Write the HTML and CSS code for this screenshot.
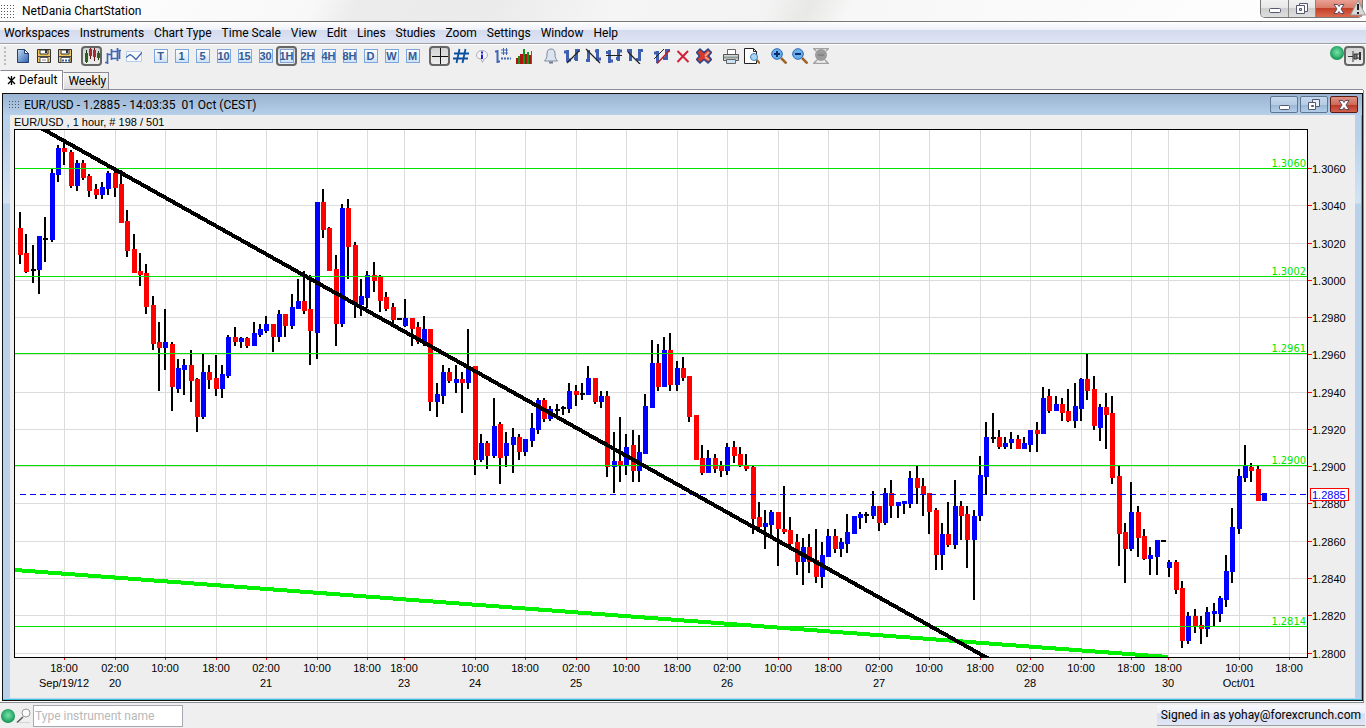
FILE: index.html
```html
<!DOCTYPE html>
<html lang="en">
<head>
    <meta charset="UTF-8">
    <meta name="viewport" content="width=device-width, initial-scale=1.0">
    <title>NetDania ChartStation</title>
    <link rel="stylesheet" href="styles.css">
</head>
<body>
    <header class="titlebar">
        <span class="dots"></span>
        <h1>NetDania ChartStation</h1>
        <div class="app-buttons">
            <button class="app-btn minimize" aria-label="Minimize"><svg width="14" height="14" viewBox="0 0 14 14"><rect x="1.500" y="6.500" width="11" height="4" rx="1" fill="#fff" stroke="#555870"/></svg></button>
            <button class="app-btn restore" aria-label="Restore"><svg width="14" height="14" viewBox="0 0 14 14"><path d="M4.500 1.500h8v8h-8z" fill="#fff" stroke="#555870"/><path d="M1.500 3.500h8v8h-8z" fill="#fff" stroke="#555870"/><path d="M4.500 6.500h2v2h-2z" fill="#ccc" stroke="#555870"/></svg></button>
            <button class="app-btn close" aria-label="Close"><svg width="14" height="14" viewBox="0 0 14 14"><path d="M2 2.500h3.500l1.500 2 1.500-2H12L9 7l3 4.500H8.500L7 9.500l-1.500 2H2L5 7z" fill="#fff" stroke="#5a4a5c"/></svg></button>
        </div>
        <svg class="warning" width="16" height="16" viewBox="0 0 16 16"><path d="M8 0.500L15.500 15H0.500z" fill="#d9d9d9" stroke="#999"/><path d="M8 4v6M8 12v2" stroke="#222" stroke-width="2"/></svg>
    </header>

    <nav class="menubar">
        <button>Workspaces</button>
        <button>Instruments</button>
        <button>Chart Type</button>
        <button>Time Scale</button>
        <button>View</button>
        <button>Edit</button>
        <button>Lines</button>
        <button>Studies</button>
        <button>Zoom</button>
        <button>Settings</button>
        <button>Window</button>
        <button>Help</button>
    </nav>

    <div class="toolbar">
        <span class="grip"></span>
        <div class="tool-group">
            <button class="tool" aria-label="New"><svg width="16" height="16" viewBox="0 0 16 16"><defs><linearGradient id="page" x2="1" y2="1"><stop offset="0" stop-color="#c5dbf5"/><stop offset="1" stop-color="#2f62b0"/></linearGradient></defs><path d="M2.500 1.500h7l4 4v9h-11z" fill="url(#page)" stroke="#23406f"/><path d="M9.500 1.500v4h4z" fill="#fff" stroke="#23406f"/></svg></button>
            <button class="tool" aria-label="Save"><svg width="16" height="16" viewBox="0 0 16 16"><path d="M1.500 1.500h13v13h-13z" fill="#f0c75e" stroke="#333"/><path d="M4 2h8v4H4z" fill="#fff" stroke="#333"/><path d="M9 2h2v3H9z" fill="#333"/><path d="M1.500 8.500h13" stroke="#444"/><path d="M4 9.500h8v5H4z" fill="#fff" stroke="#555"/><path d="M6 12h4" stroke="#888"/></svg></button>
            <button class="tool" aria-label="Save as"><svg width="16" height="16" viewBox="0 0 16 16"><path d="M1.500 1.500h13v13h-13z" fill="#f0c75e" stroke="#333"/><path d="M4 2h8v4H4z" fill="#fff" stroke="#333"/><path d="M9 2h2v3H9z" fill="#333"/><path d="M1.500 8.500h13" stroke="#444"/><path d="M4 9.500h9v5H4z" fill="#fff" stroke="#555"/><path d="M5 12.500h8" stroke="#2f62b0" stroke-width="2" stroke-dasharray="2 1"/></svg></button>
        </div>
        <div class="tool-group">
            <button class="tool pressed" aria-label="Candlesticks"><svg width="16" height="16" viewBox="0 0 16 16"><path d="M2.500 2v13M14.500 3v9" stroke="#173f17"/><path d="M1 5h3v9H1zM13 5h3v5h-3z" fill="#27641f"/><path d="M6.500 0v11M10.500 0v13" stroke="#5c1717"/><path d="M5 1h3v7H5zM9 2h3v7H9z" fill="#a52a33"/></svg></button>
            <button class="tool" aria-label="Bars"><svg width="16" height="16" viewBox="0 0 16 16"><path d="M2.500 5v11M0 14.500h2M3 6.500h3M6.500 1v11M7 3.500h6M7 10.500h5M12.500 0v13M13 2.500h3M14.500 2v9" stroke="#4068b3" stroke-width="1.700" fill="none"/></svg></button>
            <button class="tool" aria-label="Line"><svg width="16" height="16" viewBox="0 0 16 16"><path d="M0.500 3.500h15v10h-15z" fill="#fafdff" stroke="#b4cdea"/><path d="M0 9.500l4-3 3 2 3 3 6-7" stroke="#3d66ad" fill="none" stroke-width="1.400"/></svg></button>
        </div>
        <div class="tool-group">
            <button class="tool"><span class="period">T</span></button>
            <button class="tool"><span class="period">1</span></button>
            <button class="tool"><span class="period">5</span></button>
            <button class="tool"><span class="period">10</span></button>
            <button class="tool"><span class="period">15</span></button>
            <button class="tool"><span class="period">30</span></button>
            <button class="tool pressed"><span class="period">1H</span></button>
            <button class="tool"><span class="period">2H</span></button>
            <button class="tool"><span class="period">4H</span></button>
            <button class="tool"><span class="period">8H</span></button>
            <button class="tool"><span class="period">D</span></button>
            <button class="tool"><span class="period">W</span></button>
            <button class="tool"><span class="period">M</span></button>
        </div>
        <div class="tool-group">
            <button class="tool pressed" aria-label="Crosshair"><svg width="16" height="16" viewBox="0 0 16 16"><path d="M0 8.500h16M8.500 0v16" stroke="#111"/></svg></button>
            <button class="tool" aria-label="Grid"><svg width="16" height="16" viewBox="0 0 16 16"><path d="M6.500 1L3.500 15M12.500 1L9.500 15M1 5.500h15M0 10.500h15" stroke="#0b4fa0" stroke-width="1.800"/></svg></button>
            <button class="tool" aria-label="Info"><svg width="16" height="16" viewBox="0 0 16 16"><path d="M8 2.500c3 0 5.500 2 5.500 4.500S11.500 11 10 11l-1.500 3.500L7 11C4 11 2.500 9.500 2.500 7S5 2.500 8 2.500z" fill="#f4f4f8" stroke="#b0b0b8"/><path d="M8 3.500v2M8 6.500v4M7 10h2" stroke="#1722d6" stroke-width="2"/></svg></button>
            <button class="tool" aria-label="Values"><svg width="16" height="16" viewBox="0 0 16 16"><path d="M2.500 2v13M0 3.500h2M3 13.500h2" stroke="#4068b3" stroke-width="2"/><path d="M8.500 0v7M11.500 0v7M6 2h7M6 5h7" stroke="#4068b3"/><path d="M6 10.500h10" stroke="#4068b3" stroke-dasharray="2 1" stroke-width="2"/></svg></button>
            <button class="tool" aria-label="Volume"><svg width="16" height="16" viewBox="0 0 16 16"><path d="M0 10h2v6H0zM4 6h3v10H4zM9 6h2v10H9zM13 7h2v9h-2z" fill="#b01212"/><path d="M2 8h2v8H2zM7 1h2v15H7zM11 4h2v12h-2zM15 3h1v13h-1z" fill="#179117"/></svg></button>
        </div>
        <div class="tool-group">
            <button class="tool" aria-label="Alarm"><svg width="16" height="16" viewBox="0 0 16 16"><path d="M8 1c-3 0-4 2-4 5 0 4-1 5-2.500 7h13C13 11 12 10 12 6c0-3-1-5-4-5z" fill="#dce4ef" stroke="#7d8ba3"/><path d="M6 14.500h4" stroke="#6f7d95" stroke-width="2"/></svg></button>
            <button class="tool" aria-label="Trend line"><svg width="16" height="16" viewBox="0 0 16 16"><path d="M3.500 2v12M0 4h3M4 12h3M12.500 1v12M10 10.500h2M13 2.500h3" stroke="#3e5fae" stroke-width="3"/><path d="M3 15L15 3" stroke="#222" stroke-width="1.300"/></svg></button>
            <button class="tool" aria-label="Ray"><svg width="16" height="16" viewBox="0 0 16 16"><path d="M3.500 2v12M1 12.500h3M12.500 1v12M10 3h2M13 11h3" stroke="#3e5fae" stroke-width="3"/><path d="M1 1l14 14" stroke="#222" stroke-width="1.300"/></svg></button>
            <button class="tool" aria-label="Horizontal line"><svg width="16" height="16" viewBox="0 0 16 16"><path d="M3.500 2v13M0 4.500h3M4 13h3M12.500 1v12M10 10.500h2M13 3h3" stroke="#3e5fae" stroke-width="3"/><path d="M0 7.500h16" stroke="#222"/></svg></button>
            <button class="tool" aria-label="Segment"><svg width="16" height="16" viewBox="0 0 16 16"><path d="M3.500 1v12M0 2.500h3M12.500 1v12M9 11.500h3M13 2.500h3" stroke="#3e5fae" stroke-width="3"/><path d="M1 4l12 12" stroke="#222" stroke-width="1.300"/></svg></button>
        </div>
        <div class="tool-group">
            <button class="tool" aria-label="Edit lines"><svg width="16" height="16" viewBox="0 0 16 16"><path d="M3.500 3v12M0 5h3M12.500 1v11M9 10.500h3M13 2.500h3" stroke="#3e5fae" stroke-width="3"/><path d="M0 11L10 1" stroke="#222"/><path d="M3 15.500L16 2" stroke="#c11c2c" stroke-width="1.500"/></svg></button>
            <button class="tool" aria-label="Delete"><svg width="16" height="16" viewBox="0 0 16 16"><path d="M2.500 3l11 11M13 3L2.500 14" stroke="#d21f3a" stroke-width="2"/></svg></button>
            <button class="tool" aria-label="Delete all"><svg width="16" height="16" viewBox="0 0 16 16"><path d="M4 1l4 3.500L12 1l3.500 3.500L12.500 8l3 3.500L12 15l-4-3.500L4 15 .500 11.500 3.500 8l-3-3.500z" fill="#d8392b" stroke="#27478d" stroke-width="1.500"/><path d="M9 8l4-4M9 9l4 3" stroke="#f0a08c" stroke-width="2"/></svg></button>
        </div>
        <div class="tool-group">
            <button class="tool" aria-label="Print"><svg width="16" height="16" viewBox="0 0 16 16"><path d="M4.500 1.500h8v5h-8z" fill="#fff" stroke="#666"/><path d="M.500 6.500h15v6H.500z" fill="#d5d8d8" stroke="#555"/><path d="M1 9.500h14" stroke="#8c9a9a" stroke-width="2"/><path d="M3.500 11.500h9v4h-9z" fill="#c9e2f4" stroke="#666"/></svg></button>
            <button class="tool" aria-label="Print preview"><svg width="16" height="16" viewBox="0 0 16 16"><path d="M.500 .500h9l3 3v12H.500z" fill="#fff" stroke="#222"/><path d="M9.500 .500v3h3" fill="none" stroke="#222"/><path d="M12 11l4 4.500" stroke="#9b6328" stroke-width="2"/><circle cx="10" cy="9" r="3.500" fill="#a9d4f4" stroke="#4282bd"/></svg></button>
        </div>
        <div class="tool-group">
            <button class="tool" aria-label="Zoom in"><svg width="16" height="16" viewBox="0 0 16 16"><path d="M10 10l5.500 5.500" stroke="#9b6328" stroke-width="2.500"/><circle cx="6" cy="6" r="5.300" fill="#69b0ee" stroke="#2a66b1"/><path d="M3 6h6M6 3v6" stroke="#0c2f6b" stroke-width="2"/></svg></button>
            <button class="tool" aria-label="Zoom out"><svg width="16" height="16" viewBox="0 0 16 16"><path d="M10 10l5.500 5.500" stroke="#9b6328" stroke-width="2.500"/><circle cx="6" cy="6" r="5.300" fill="#69b0ee" stroke="#2a66b1"/><path d="M3 6h6" stroke="#0c2f6b" stroke-width="2"/></svg></button>
            <button class="tool" aria-label="Zoom reset"><svg width="16" height="16" viewBox="0 0 16 16"><path d="M0 .500h16M0 15.500h16M1 15l3-3M12 12l3 3M1 1l2 2M13 3l2-2" stroke="#a2a2a2" stroke-width="1.500"/><circle cx="8" cy="7" r="6" fill="#9b9b9b"/><path d="M5 7h6" stroke="#868686" stroke-width="2"/></svg></button>
        </div>
        <div class="toolbar-end">
            <span class="status-light"></span>
            <button class="tool pressed" aria-label="Pin"><svg width="16" height="16" viewBox="0 0 16 16"><path d="M1 8.500h5" stroke="#333"/><path d="M6 3v11M7 6h3v5H7zM10 6h3M10 10h3" stroke="#333" fill="#777"/><path d="M12 4h2v8h-2z" fill="#333"/></svg></button>
        </div>
    </div>

    <div class="tabs">
        <button class="tab active"><svg width="9" height="9" viewBox="0 0 9 9"><path d="M4.500 0v9M1 1l7 7M8 1L1 8" stroke="#000" stroke-width="1.300"/></svg>Default</button>
        <button class="tab">Weekly</button>
    </div>

    <main class="workspace">
        <section class="window">
            <div class="window-title">
                <span class="dots small"></span>
                <h2>EUR/USD - 1.2885 - 14:03:35&nbsp; 01 Oct (CEST)</h2>
                <div class="window-buttons">
                    <button class="win-btn" aria-label="Minimize chart"><svg width="14" height="14" viewBox="0 0 14 14"><rect x="2.500" y="7.500" width="10" height="4" rx="1" fill="#fff" stroke="#555870"/></svg></button>
                    <button class="win-btn" aria-label="Restore chart"><svg width="14" height="14" viewBox="0 0 14 14"><path d="M5.500 1.500h7v7h-7z" fill="#e8eef8" stroke="#555870"/><path d="M1.500 4.500h7v7h-7z" fill="#fff" stroke="#555870"/><path d="M4.500 7.500h2v1h-2z" fill="#ccc" stroke="#555870"/></svg></button>
                    <button class="win-btn close" aria-label="Close chart"><svg width="14" height="14" viewBox="0 0 14 14"><path d="M2 2.500h3.500l1.500 2 1.500-2H12L9 7l3 4.500H8.500L7 9.500l-1.500 2H2L5 7z" fill="#fff" stroke="#5a4a5c"/></svg></button>
                </div>
            </div>
            <div class="window-body">
                <svg id="chart" class="chart"></svg>
            </div>
        </section>
    </main>

    <footer class="statusbar">
        <span class="status-light"></span>
        <label for="instrument" aria-label="Instrument"><svg width="16" height="16" viewBox="0 0 16 16"><path d="M3 14.500h11" stroke="#d5d5d5"/><path d="M7 9l-6 5.500" stroke="#555" stroke-width="1.500"/><circle cx="10" cy="5" r="4" fill="#fafafa" stroke="#999"/></svg></label>
        <input type="text" id="instrument" placeholder="Type instrument name">
        <span class="signed-in">Signed in as yohay@forexcrunch.com</span>
    </footer>

    <script src="chart.js"></script>
</body>
</html>
```

FILE: styles.css
```css
* {
    margin: 0;
    padding: 0;
    box-sizing: border-box;
}

body {
    height: 100vh;
    display: flex;
    flex-direction: column;
    background: #efefef;
    color: #000;
    font-family: Roboto, 'Open Sans', sans-serif;
    font-size: 12px;
    overflow: hidden;
}

button {
    border: none;
    background: none;
    font: inherit;
    color: inherit;
}

svg {
    display: block;
}

h1, h2 {
    font-size: 12px;
    font-weight: 400;
}

/* application title bar */
.titlebar {
    position: relative;
    display: flex;
    align-items: center;
    gap: 7px;
    height: 22px;
    background: linear-gradient(115deg, #ffffff 0%, #f8f8f8 23%, #ececec 26%, #ebebeb 36%, #f5f5f5 45%, #f3f3f3 56%, #e8e8e6 59%, #f7f7f7 62%, #ffffff 100%);
    border-bottom: 1px solid #777;
}

.dots {
    width: 15px;
    height: 14px;
    background: radial-gradient(circle, #555 1px, transparent 1px) 0 0 / 3px 3px;
}

.dots.small {
    width: 11px;
    height: 9px;
}

.app-buttons {
    display: flex;
    align-self: flex-start;
    margin-left: auto;
    margin-right: 3px;
    border: 1px solid #777;
    border-top: none;
    border-radius: 0 0 5px 5px;
    overflow: hidden;
}

.app-btn {
    width: 28px;
    height: 17px;
    display: flex;
    align-items: center;
    justify-content: center;
    background: linear-gradient(#f1f1f1 0%, #e6e6e6 50%, #cfcfcf 50%, #dedede 100%);
    border-right: 1px solid #888;
}

.app-btn.restore {
    width: 27px;
}

.app-btn.close {
    width: 46px;
    border-right: none;
    background: linear-gradient(#e8a193 0%, #d97a68 50%, #c33f27 50%, #dc6a4e 100%);
}

.warning {
    position: absolute;
    right: 0;
    top: 0;
}

/* menu */
.menubar {
    display: flex;
    gap: 10px;
    height: 22px;
    padding-left: 4px;
    background: linear-gradient(#ffffff 0%, #eef1f9 36%, #d4dbed 40%, #dfe5f5 100%);
    border-bottom: 1px solid #a0a0a0;
}

.menubar button {
    line-height: 20px;
}

/* toolbar */
.toolbar {
    display: flex;
    gap: 6px;
    height: 26px;
    padding: 1px 0 4px 4px;
    border-top: 1px solid #fff;
}

.grip {
    width: 2px;
    background: radial-gradient(circle, #bbb 1px, transparent 1px) 0 0 / 2px 4px;
}

.tool-group {
    display: flex;
}

.tool {
    width: 21px;
    height: 20px;
    display: flex;
    align-items: center;
    justify-content: center;
}

.tool.pressed {
    background: linear-gradient(#d2d2d2, #eeeeee);
    border: 2px solid #666;
    border-radius: 4px;
}

.period {
    width: 14px;
    height: 14px;
    display: flex;
    align-items: center;
    justify-content: center;
    flex: none;
    background: linear-gradient(#ffffff, #cfe2f7);
    border: 1px solid #7da7dc;
    color: #355a94;
    font-family: 'Liberation Sans', Arial, sans-serif;
    font-size: 11px;
    font-weight: 700;
}

.toolbar-end {
    display: flex;
    margin-left: auto;
    margin-right: 1px;
}

.status-light {
    width: 14px;
    height: 14px;
    flex: none;
    border-radius: 50%;
    background: radial-gradient(circle at 50% 45%, #7be0a6 0%, #39b877 45%, #138a4b 75%);
}

/* workspace tabs */
.tabs {
    display: flex;
    align-items: flex-end;
    height: 20px;
    margin-right: 3px;
    border-bottom: 1px solid #8b8b96;
}

.tab {
    display: flex;
    align-items: center;
    gap: 3px;
    height: 18px;
    padding: 0 2px 0 4px;
    margin-bottom: -1px;
    border: 1px solid #8b8b96;
    border-left-color: #fff;
    background: linear-gradient(#f5f5f5, #dcdcdc);
}

.tab.active {
    height: 20px;
    padding: 0 5px 0 6px;
    background: #fff;
    border-bottom-color: #fff;
}

/* chart window */
.workspace {
    flex: 1;
    min-height: 0;
    display: flex;
    margin-right: 2px;
    padding: 3px 0 1px 2px;
    background: #fff;
    border-right: 1px solid #8b8b96;
    border-bottom: 1px solid #8b8b96;
}

.window {
    flex: 1;
    min-width: 0;
    display: flex;
    flex-direction: column;
    border: 1px solid #111;
}

.window-title {
    display: flex;
    align-items: center;
    gap: 5px;
    height: 21px;
    flex: none;
    padding: 0 4px 0 5px;
    background: linear-gradient(#9ab4d2, #b6d0ea);
}

.window-buttons {
    display: flex;
    gap: 2px;
    margin-left: auto;
}

.win-btn {
    width: 28px;
    height: 17px;
    display: flex;
    align-items: center;
    justify-content: center;
    border: 1px solid #5f7590;
    border-radius: 2px;
    background: linear-gradient(#c5d8ec 0%, #b5cce5 50%, #98b5d4 50%, #b4cee8 100%);
}

.win-btn.close {
    border-color: #5d1a14;
    background: linear-gradient(#dd9284 0%, #cf6a59 50%, #b93524 50%, #d3604c 100%);
}

.window-body {
    flex: 1;
    min-height: 0;
    padding: 0 6px 1px 7px;
    background: linear-gradient(#b9d1ea 0, #b9d1ea 20px, #d3e3f4 88px, #b9d1ea 89px);
    border-right: 1px solid #3cc3dd;
    border-bottom: 1px solid #3cc3dd;
}

.chart {
    width: 100%;
    height: 100%;
    background: #eee;
    font-family: 'Liberation Sans', Arial, sans-serif;
    font-size: 11px;
    shape-rendering: crispEdges;
}

.plot { fill: #fff; stroke: #000; }
.grid { stroke: #dcdcdc; }
.tick { stroke: #f00; }
.level { stroke: #00e400; }
.level-label {
    fill: #00e400;
    font-family: 'DejaVu Sans Condensed', 'DejaVu Sans', sans-serif;
    text-anchor: end;
}
.time-label { text-anchor: middle; }
.up { fill: #00f; }
.down { fill: #f00; }
.flat, .wick { fill: #000; }
.last-line { stroke: #00f; stroke-dasharray: 6 4; }
.last-box { fill: #fff; stroke: #f00; }
.last-label { fill: #00f; }
.support { stroke: #00f000; stroke-width: 4; }
.trend { stroke: #000; stroke-width: 4; }

/* status bar */
.statusbar {
    display: flex;
    align-items: center;
    gap: 1px;
    height: 25px;
    flex: none;
    padding: 0 1px;
}

.statusbar input {
    width: 150px;
    height: 22px;
    padding: 0 1px;
    border: 1px solid #a8a8b0;
    background: #fff;
    font: inherit;
}

.statusbar input::placeholder {
    color: #b8b8b8;
}

.signed-in {
    margin-left: auto;
    padding: 0 4px;
    line-height: 20px;
    background: linear-gradient(#f7f8fc 0%, #eef1f9 40%, #d6ddef 44%, #e0e6f5 100%);
    border-bottom: 1px solid #a0a0a0;
}
```

FILE: chart.js
```js
// colour (b up, r down, k unchanged), high, body top, body bottom, low
const candles = `
r 212 228 255 264|r 234 253 272 273|k 245 269 271 283|b 236 236 270 294|k 217 238 240 262|b 169 173 240 242
b 145 148 175 182|r 140 148 152 165|r 150 152 186 188|b 160 163 186 191|r 160 163 178 180|r 174 176 191 197
r 184 189 195 199|b 182 187 195 199|b 171 173 189 195|r 170 173 188 197|r 170 184 223 223|r 210 221 251 257
r 234 249 273 273|r 253 271 275 286|r 264 273 307 314|r 296 305 344 350|r 322 342 348 391|b 309 342 348 370
r 342 344 387 411|b 359 368 389 393|b 359 365 370 395|r 350 365 381 402|r 378 379 417 432|b 354 372 417 419
r 365 372 380 389|r 355 378 389 396|b 365 374 389 398|b 335 337 376 378|r 327 337 342 346|b 337 338 342 348
r 337 338 346 348|b 322 333 346 346|b 324 329 335 337|b 316 324 331 333|r 324 324 337 352|b 310 314 337 342
r 314 314 326 337|b 294 307 326 329|b 279 301 309 309|r 271 301 311 314|r 275 309 331 365|b 202 202 333 359
r 189 202 230 238|r 227 228 271 271|r 255 269 324 346|b 204 208 324 327|r 199 208 247 279|r 242 245 303 318
b 279 296 305 316|b 271 275 298 308|r 262 275 281 292|r 275 277 301 312|r 292 297 309 311|r 303 307 320 325
k 318 318 320 320|b 299 318 326 327|r 318 318 329 346|r 322 327 342 344|b 316 329 342 346|r 329 329 402 411
b 383 394 402 417|b 365 372 396 404|r 368 372 381 383|b 365 379 383 393|r 372 379 383 413|b 329 367 383 389
r 366 366 460 475|b 434 443 460 462|r 441 443 456 469|b 398 426 456 458|r 422 424 458 484|b 432 443 456 467
b 428 437 445 473|r 434 437 452 460|b 439 439 452 456|b 413 428 441 447|b 398 400 430 434|r 398 400 419 422
b 406 409 419 421|k 404 409 411 416|k 406 407 409 415|b 383 391 409 413|r 385 391 395 406|k 383 393 395 400
b 366 378 395 395|r 378 378 402 404|b 391 396 402 408|r 391 396 467 477|b 432 461 467 493|r 417 461 465 482
b 434 447 465 475|r 430 445 471 482|b 435 452 471 482|b 394 406 454 454|b 340 363 408 408|r 344 363 387 391
b 337 350 387 387|r 333 350 385 391|b 361 368 385 391|r 357 368 378 381|r 376 376 417 422|r 415 415 460 460
r 445 458 473 475|b 450 458 473 473|r 454 458 469 473|r 461 465 471 477|b 443 447 471 475|r 441 447 456 463
r 447 454 466 467|r 454 466 469 471|r 466 467 519 534|r 502 517 527 530|b 510 523 527 549|b 510 512 525 538
r 512 512 529 566|r 486 529 532 534|r 517 530 544 548|r 534 542 562 575|b 538 547 562 585|r 534 547 562 573
r 529 560 577 583|b 542 555 577 588|b 529 536 557 557|r 529 536 549 553|b 538 542 549 557|b 514 532 544 553
b 516 516 534 534|b 512 514 518 529|k 512 514 516 523|b 491 506 516 519|r 506 506 523 531|b 488 493 523 525
r 480 493 506 518|b 502 502 506 518|b 501 501 504 514|b 471 478 504 508|r 466 478 488 504|r 478 486 494 516
r 493 493 512 534|r 508 510 555 570|b 523 534 555 570|r 502 534 545 547|b 480 506 545 549|r 501 506 516 540
r 506 514 540 568|b 510 516 540 600|b 456 475 516 521|b 422 437 477 495|k 413 437 439 443|r 430 437 447 449
b 437 443 447 449|b 432 439 443 449|r 435 439 449 449|b 437 443 449 449|b 430 430 445 452|r 422 430 434 452
b 387 398 434 434|r 389 396 411 413|b 396 404 411 411|r 398 404 413 421|r 389 411 421 422|b 383 406 421 428
b 378 379 409 421|r 354 379 391 400|r 376 389 426 430|b 404 407 428 441|r 393 407 415 449|r 396 413 478 484
r 466 476 534 566|r 523 532 549 583|b 482 512 549 551|r 506 512 538 557|r 529 536 559 560|b 547 555 559 575
b 540 540 557 575|k 540 540 542 542|b 560 562 568 577|r 560 562 590 594|r 581 588 641 648|b 612 616 641 644
r 609 616 626 633|r 616 625 629 644|b 607 612 629 637|b 603 611 614 626|b 596 598 614 622|b 555 571 600 607
b 508 527 572 583|b 469 476 529 534|b 445 466 478 482|r 463 467 471 482|r 466 469 501 501|b 493 493 501 501
`.trim().split(/[|\n]/).map(row => row.split(' '));

const prices = [
    [168, '1.3060'], [205, '1.3040'], [243, '1.3020'], [280, '1.3000'], [317, '1.2980'],
    [354, '1.2960'], [392, '1.2940'], [429, '1.2920'], [466, '1.2900'], [503, '1.2880'],
    [541, '1.2860'], [578, '1.2840'], [615, '1.2820'], [653, '1.2800']
];

const levels = [[168, '1.3060'], [276, '1.3002'], [353, '1.2961'], [465, '1.2900'], [626, '1.2814']];

const times = [
    [64, '18:00', 'Sep/19/12'], [115, '02:00', '20'], [165, '10:00'], [216, '18:00'],
    [266, '02:00', '21'], [317, '10:00'], [367, '18:00'], [404, '18:00', '23'],
    [475, '10:00', '24'], [525, '18:00'], [576, '02:00', '25'], [626, '10:00'],
    [677, '18:00'], [727, '02:00', '26'], [778, '10:00'], [828, '18:00'],
    [879, '02:00', '27'], [929, '10:00'], [980, '18:00'], [1030, '02:00', '28'],
    [1081, '10:00'], [1131, '18:00'], [1168, '18:00', '30'], [1239, '10:00', 'Oct/01'], [1289, '18:00']
];

const bodyClass = { b: 'up', r: 'down', k: 'flat' };
const margin = { left: 5, top: 15, right: 48, bottom: 41 };

function drawChart() {
    const chart = document.getElementById('chart');
    const right = chart.clientWidth - margin.right;
    const bottom = chart.clientHeight - margin.bottom;
    const kx = (right - margin.left) / 1292;
    const ky = (bottom - margin.top) / 527;
    const X = v => Math.round(margin.left + (v - 15) * kx);
    const Y = v => Math.round(margin.top + (v - 130) * ky);
    const left = margin.left;
    const top = margin.top;

    const line = (cls, x1, y1, x2, y2) => `<line class="${cls}" x1="${x1}" y1="${y1}" x2="${x2}" y2="${y2}"/>`;
    const rect = (cls, x, y, w, h) => `<rect class="${cls}" x="${x}" y="${y}" width="${w}" height="${h}"/>`;
    const text = (cls, x, y, s) => `<text class="${cls}" x="${x}" y="${y}">${s}</text>`;

    let out = text('caption', 4, 11, 'EUR/USD , 1 hour, # 198 / 501');
    out += `<clipPath id="area"><rect x="${left}" y="${top}" width="${right - left}" height="${bottom - top}"/></clipPath>`;
    out += rect('plot', left - 0.5, top - 0.5, right - left + 1, bottom - top + 1);

    prices.forEach(([v, label]) => {
        const y = Y(v) + 0.5;
        out += line('grid', left, y, right, y);
        out += line('tick', right + 1, y, right + 5, y);
        out += text('', right + 5, Y(v) + 5, label);
    });

    times.forEach(([v, time, date]) => {
        const x = X(v) + 0.5;
        out += line('grid', x, top, x, bottom);
        out += line('tick', x, bottom + 1, x, bottom + 3);
        out += text('time-label', X(v), bottom + 15, time);
        if (date) {
            out += text('time-label', X(v), bottom + 30, date);
        }
    });

    candles.forEach(([colour, high, bodyTop, bodyBottom, low], i) => {
        const x = X(18 + i * 6.315);
        out += rect('wick', x + 1, Y(high), 2, Y(low) - Y(high));
        out += rect(bodyClass[colour], x, Y(bodyTop), 5, Y(bodyBottom) - Y(bodyTop));
    });

    levels.forEach(([v, label]) => {
        out += line('level', left, Y(v) + 0.5, right, Y(v) + 0.5);
        out += text('level-label', right - 1, Y(v) - 1, label);
    });

    // last price
    const last = Y(494);
    out += line('last-line', X(20), last + 0.5, right, last + 0.5);
    out += rect('last-box', right + 3.5, last - 5.5, 38, 12);
    out += text('last-label', right + 5, last + 5, '1.2885');

    out += '<g clip-path="url(#area)">';
    out += line('support', X(15), Y(570), X(1168), Y(657));
    out += line('trend', X(41), Y(128), X(989), Y(659));
    out += '</g>';

    chart.innerHTML = out;
}

window.addEventListener('load', drawChart);
window.addEventListener('resize', drawChart);
```
